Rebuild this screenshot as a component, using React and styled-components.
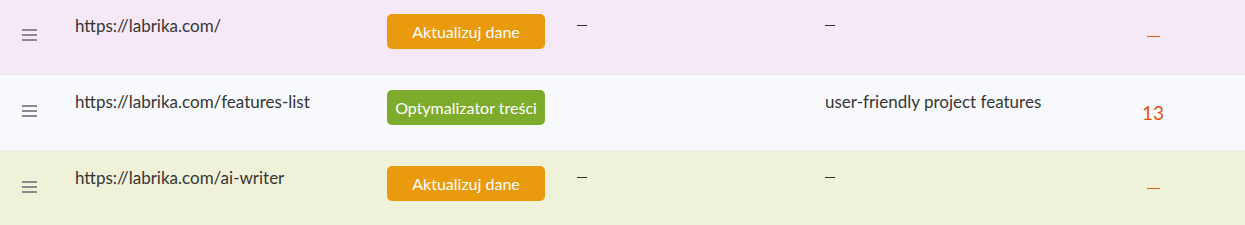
import React from "react";
import styled, { createGlobalStyle } from "styled-components";

const Global = createGlobalStyle`
  html, body { margin: 0; padding: 0; background: #f8f9fc; }
  body { font-family: Lato, "Open Sans", sans-serif; color: #363636; }
`;

const Table = styled.div`
  width: 1245px;
  margin-top: -1px;
  display: flex;
  flex-direction: column;
`;

const Row = styled.div`
  display: grid;
  grid-template-columns: 53px 312px 190px 248px 256px 144px;
  padding-left: 22px;
  height: 76px;
  box-sizing: border-box;
  border-bottom: 1px solid #e9ebee;
  background: ${(p) => p.$bg};
`;

const Cell = styled.div`
  padding-top: ${(p) => p.$pt || 0}px;
  font-size: 17px;
  line-height: 24px;
`;

const HandleCell = styled.div`
  padding-top: 26px;
`;

const CenterCell = styled.div`
  display: flex;
  align-items: center;
  justify-content: center;
  font-size: 19px;
  color: #e1570e;
`;

const Url = styled.span`
  display: block;
  white-space: nowrap;
`;

const Button = styled.div`
  width: 158px;
  height: 35px;
  border-radius: 5px;
  background: ${(p) => p.$color};
  color: #fff;
  font-size: 16px;
  display: flex;
  align-items: center;
  justify-content: center;
  white-space: nowrap;
`;

const Dash = styled.span`
  display: block;
  width: 10px;
  height: 1px;
  margin-top: 11px;
  background: #2e2e2e;
`;

const OrangeDash = styled.span`
  display: block;
  width: 13px;
  height: 1px;
  background: #dc5f12;
`;

const Handle = () => (
  <svg width="15" height="12" viewBox="0 0 15 12">
    <rect x="0" y="0" width="15" height="2" fill="#8a8a8a" />
    <rect x="0" y="5" width="15" height="2" fill="#8a8a8a" />
    <rect x="0" y="10" width="15" height="2" fill="#8a8a8a" />
  </svg>
);

const rows = [
  {
    bg: "#f6e9f7",
    url: "https://labrika.com/",
    btn: "Aktualizuj dane",
    btnColor: "#e99b0d",
    c3: "dash",
    c4: "dash",
    c5: null,
  },
  {
    bg: "#f8f9fc",
    url: "https://labrika.com/features-list",
    btn: "Optymalizator treści",
    btnColor: "#7dac2d",
    c3: null,
    c4: "user-friendly project features",
    c5: "13",
  },
  {
    bg: "#eff1d8",
    url: "https://labrika.com/ai-writer",
    btn: "Aktualizuj dane",
    btnColor: "#e99b0d",
    c3: "dash",
    c4: "dash",
    c5: null,
  },
];

export default function App() {
  return (
    <>
      <Global />
      <Table>
        {rows.map((r, i) => (
          <Row key={i} $bg={r.bg}>
            <HandleCell>
              <Handle />
            </HandleCell>
            <Cell $pt={15}>
              <Url>{r.url}</Url>
            </Cell>
            <Cell $pt={15}>
              <Button $color={r.btnColor}>{r.btn}</Button>
            </Cell>
            <Cell $pt={15}>{r.c3 === "dash" ? <Dash /> : r.c3}</Cell>
            <Cell $pt={15}>{r.c4 === "dash" ? <Dash /> : r.c4}</Cell>
            <CenterCell>{r.c5 ? r.c5 : <OrangeDash />}</CenterCell>
          </Row>
        ))}
      </Table>
    </>
  );
}
